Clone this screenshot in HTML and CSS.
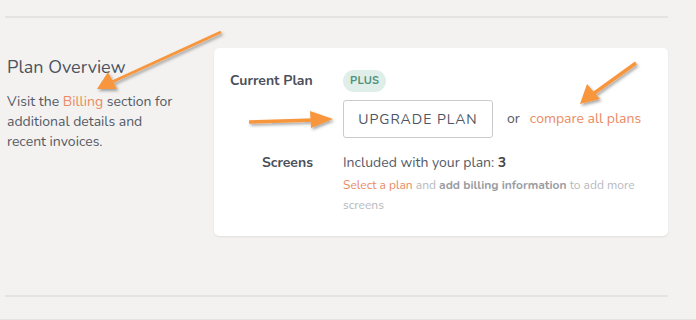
FILE: index.html
```html
<!DOCTYPE html>
<html>
<head>
<meta charset="utf-8">
<link rel="stylesheet" href="styles.css">
</head>
<body>
<div class="page">
  <hr class="rule">
  <section class="section">
    <div class="intro">
      <h2 class="intro-title">Plan Overview</h2>
      <p class="intro-text">Visit the <a class="link">Billing</a> section for additional details and recent invoices.</p>
    </div>
    <div class="card">
      <div class="label label-plan">Current Plan</div>
      <div class="value">
        <span class="badge">PLUS</span>
        <div class="actions">
          <button class="btn">UPGRADE PLAN</button>
          <span class="or">or</span>
          <a class="link">compare all plans</a>
        </div>
      </div>
      <div class="label label-screens">Screens</div>
      <div class="value value-screens">
        <div class="included">Included with your plan: <b>3</b></div>
        <p class="hint"><a class="link">Select a plan</a> and <b>add billing information</b> to add more screens</p>
      </div>
    </div>
  </section>
  <hr class="rule">
  <div class="edge"></div>
</div>
<svg class="arrows" width="696" height="320" viewBox="0 0 696 320">
  <defs>
    <filter id="sh" x="-20%" y="-20%" width="140%" height="140%">
      <feDropShadow dx="1.5" dy="2" stdDeviation="1.5" flood-color="#000" flood-opacity="0.35"/>
    </filter>
  </defs>
  <g fill="#f7963c" stroke="#f7963c" filter="url(#sh)">
    <line x1="221" y1="32" x2="112" y2="82" stroke-width="3"/>
    <polygon points="97,89 108,72 117,89" stroke="none"/>
    <line x1="249" y1="122" x2="314" y2="120" stroke-width="3.5"/>
    <polygon points="333,119 310,111 311,128" stroke="none"/>
    <line x1="636" y1="63" x2="593" y2="94" stroke-width="3.5"/>
    <polygon points="580,104 587,84 600,99" stroke="none"/>
  </g>
</svg>
</body>
</html>
```
FILE: styles.css
```css
html, body {
  margin: 0;
  padding: 0;
  background: #f3f2f0;
  font-family: "Nunito", "Lato", "Noto Sans", sans-serif;
  color: #555a66;
}
.page {
  width: 696px;
  height: 320px;
  position: relative;
  overflow: hidden;
}
.rule {
  margin: 0 28px 0 5px;
  border: 0;
  height: 2px;
  background: #e5e3e0;
}
.page > .rule:first-child {
  margin-top: 16px;
}
.section {
  display: flex;
  padding: 30px 28px 59px 7px;
}
.intro {
  width: 207px;
  padding-top: 7px;
}
.intro-title {
  margin: 0;
  font-size: 18px;
  line-height: 24px;
  font-weight: 400;
  color: #4d5260;
}
.intro-text {
  margin: 13px 0 0;
  font-size: 14px;
  line-height: 20px;
  color: #555a66;
  width: 168px;
}
.link {
  color: #ea8a63;
  text-decoration: none;
}
.card {
  flex: 1;
  background: #fff;
  border-radius: 5px;
  box-shadow: 0 1px 2px rgba(0,0,0,0.08);
  padding: 22px 16px 23px;
  display: grid;
  grid-template-columns: 83px 1fr;
  grid-template-rows: auto 1fr;
  column-gap: 30px;
  row-gap: 15px;
  height: 143px;
}
.label {
  font-size: 14px;
  font-weight: 700;
  color: #4a4f5a;
  text-align: right;
  line-height: 20px;
}
.label-plan {
  text-align: left;
  padding-top: 1px;
}
.value {
  font-size: 14px;
  line-height: 20px;
}
.badge {
  display: inline-block;
  background: #dfeee8;
  color: #4f917a;
  font-size: 11px;
  font-weight: 700;
  line-height: 22px;
  padding: 0 7px;
  border-radius: 11px;
  letter-spacing: 0.3px;
}
.actions {
  display: flex;
  align-items: center;
  margin-top: 8px;
}
.btn {
  width: 150px;
  height: 38px;
  border: 1px solid #cbcbcb;
  border-radius: 3px;
  background: #fff;
  font-family: inherit;
  font-size: 14px;
  letter-spacing: 1px;
  color: #4f5462;
  padding: 0;
}
.or {
  margin: 0 10px 0 14px;
  color: #555a66;
}
.included {
  color: #555a66;
}
.included b {
  color: #444;
}
.hint {
  margin: 2px 0 0;
  font-size: 12px;
  line-height: 20px;
  color: #b7b9be;
  width: 300px;
}
.hint b {
  color: #9a9ca3;
}
.edge {
  position: absolute;
  left: 0;
  right: 0;
  bottom: 0;
  height: 1px;
  background: #e5e3e0;
}
.arrows {
  position: absolute;
  left: 0;
  top: 0;
  pointer-events: none;
}
```
